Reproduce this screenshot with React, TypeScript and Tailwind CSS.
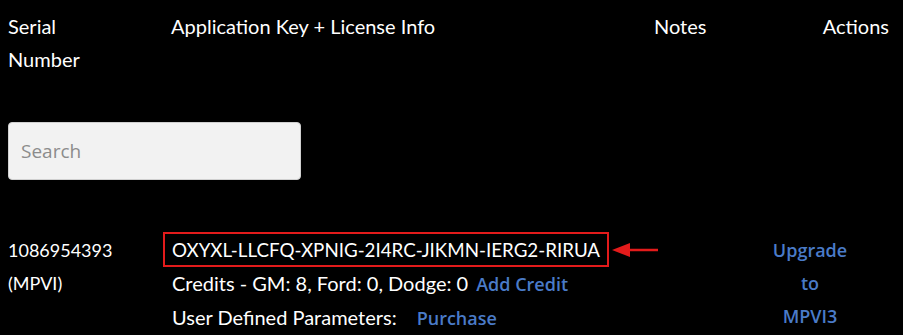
export default function App() {
  const body = "font-['Lato','Noto_Sans',sans-serif]";
  const link = "font-['Open_Sans','Noto_Sans',sans-serif] font-semibold text-[18px] text-[#4a7bc8]";
  return (
    <div className={`w-[903px] h-[335px] bg-black text-white overflow-hidden ${body}`}>
      <div className="flex pt-[10px] text-[20px] leading-[33px]">
        <div className="w-[163px] pl-2">
          Serial
          <br />
          Number
        </div>
        <div className="w-[483px] pl-2">Application Key + License Info</div>
        <div className="flex-1 pl-2">Notes</div>
        <div className="pr-[14px]">Actions</div>
      </div>

      <div className="pl-2 pt-[46px]">
        <input
          placeholder="Search"
          className="w-[293px] h-[58px] rounded-[4px] bg-[#f2f2f2] border border-[#d0d0d0] px-[12px] text-[19px] text-gray-700 placeholder:text-[#8c8c8c] font-['Open_Sans','Noto_Sans',sans-serif] outline-none"
        />
      </div>

      <div className="flex pt-[52px] leading-[33px]">
        <div className="w-[163px] pl-2 pt-[2px] text-[18px]">
          1086954393
          <br />
          (MPVI)
        </div>
        <div className="w-[540px] text-[20px]">
          <div className="flex items-center">
            <div className="border-2 border-[#e31b1b] h-[35px] px-[7px] flex items-center text-[18.75px]">
              OXYXL-LLCFQ-XPNIG-2I4RC-JIKMN-IERG2-RIRUA
            </div>
            <svg width="48" height="14" viewBox="0 0 48 14" className="ml-[3px]">
              <polygon points="0,7 18,0 18,14" fill="#e31b1b" />
              <rect x="16" y="5.75" width="30" height="2.5" fill="#e31b1b" />
            </svg>
          </div>
          <div className="pl-[9px]">
            Credits - GM: 8, Ford: 0, Dodge: 0
            <span className={`ml-[8px] ${link}`}>Add Credit</span>
          </div>
          <div className="pl-[9px]">
            User Defined Parameters:
            <span className={`ml-[20px] ${link}`}>Purchase</span>
          </div>
        </div>
        <div className={`w-[150px] ml-[32px] pt-[2px] text-center ${link}`}>
          Upgrade
          <br />
          to
          <br />
          MPVI3
        </div>
      </div>
    </div>
  );
}
